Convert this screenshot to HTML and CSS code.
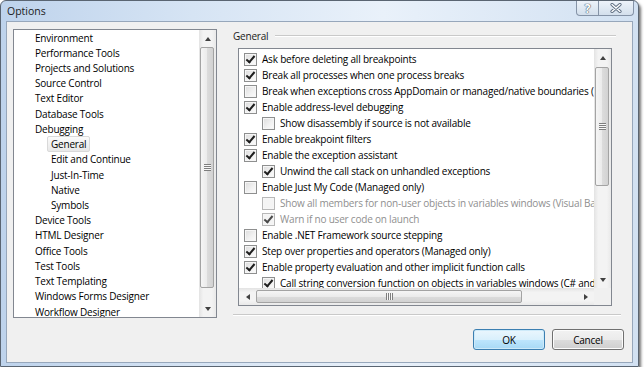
FILE: index.html
```html
<!DOCTYPE html>
<html>

<head>
    <title>Options</title>
    <link rel="stylesheet" href="styles.css">
</head>

<body>
    <div class="window">
        <div class="titlebar">
            <span class="title">Options</span>
            <div class="caption-btns">
                <span class="cap-btn help">?</span>
                <span class="cap-btn close">
                    <svg width="12" height="10" viewBox="0 0 12 10">
                        <path d="M2 1.5 L10 8.5 M10 1.5 L2 8.5" stroke="#5d6d82" stroke-width="3.2" stroke-linecap="round" />
                        <path d="M2 1.5 L10 8.5 M10 1.5 L2 8.5" stroke="#fff" stroke-width="1.4" stroke-linecap="round" />
                    </svg>
                </span>
            </div>
        </div>

        <div class="client">
            <div class="main">
                <div class="tree">
                    <ul class="tree-items">
                        <li>Environment</li>
                        <li>Performance Tools</li>
                        <li>Projects and Solutions</li>
                        <li>Source Control</li>
                        <li>Text Editor</li>
                        <li>Database Tools</li>
                        <li>Debugging</li>
                        <li class="sub"><span class="selected">General</span></li>
                        <li class="sub">Edit and Continue</li>
                        <li class="sub">Just-In-Time</li>
                        <li class="sub">Native</li>
                        <li class="sub">Symbols</li>
                        <li>Device Tools</li>
                        <li>HTML Designer</li>
                        <li>Office Tools</li>
                        <li>Test Tools</li>
                        <li>Text Templating</li>
                        <li>Windows Forms Designer</li>
                        <li>Workflow Designer</li>
                    </ul>
                    <div class="vscroll">
                        <div class="sb-btn"><span class="arr up"></span></div>
                        <div class="sb-track">
                            <div class="vthumb tree-thumb"><span class="grip"></span></div>
                        </div>
                        <div class="sb-btn"><span class="arr down"></span></div>
                    </div>
                </div>

                <div class="panel">
                    <div class="group-head">
                        <span>General</span>
                        <div class="head-line"></div>
                    </div>
                    <div class="listbox">
                        <div class="list-area">
                            <ul class="opts">
                                <li><span class="cb on"></span>Ask before deleting all breakpoints</li>
                                <li><span class="cb on"></span>Break all processes when one process breaks</li>
                                <li><span class="cb"></span>Break when exceptions cross AppDomain or managed/native boundaries (Managed only)</li>
                                <li><span class="cb on"></span>Enable address-level debugging</li>
                                <li class="sub"><span class="cb"></span>Show disassembly if source is not available</li>
                                <li><span class="cb on"></span>Enable breakpoint filters</li>
                                <li><span class="cb on"></span>Enable the exception assistant</li>
                                <li class="sub"><span class="cb on"></span>Unwind the call stack on unhandled exceptions</li>
                                <li><span class="cb"></span>Enable Just My Code (Managed only)</li>
                                <li class="sub off"><span class="cb"></span>Show all members for non-user objects in variables windows (Visual Basic only)</li>
                                <li class="sub off"><span class="cb on"></span>Warn if no user code on launch</li>
                                <li><span class="cb"></span>Enable .NET Framework source stepping</li>
                                <li><span class="cb on"></span>Step over properties and operators (Managed only)</li>
                                <li><span class="cb on"></span>Enable property evaluation and other implicit function calls</li>
                                <li class="sub"><span class="cb on"></span>Call string conversion function on objects in variables windows (C# and JavaScript only)</li>
                            </ul>
                            <div class="vscroll">
                                <div class="sb-btn"><span class="arr up"></span></div>
                                <div class="sb-track">
                                    <div class="vthumb opt-thumb"><span class="grip"></span></div>
                                </div>
                                <div class="sb-btn"><span class="arr down"></span></div>
                            </div>
                        </div>
                        <div class="hscroll">
                            <div class="sb-btn"><span class="arr left"></span></div>
                            <div class="sb-track">
                                <div class="hthumb"><span class="grip"></span></div>
                            </div>
                            <div class="sb-btn"><span class="arr right"></span></div>
                            <div class="corner"></div>
                        </div>
                    </div>
                    <div class="sep"></div>
                </div>
            </div>

            <div class="buttons">
                <button class="btn default">OK</button>
                <button class="btn">Cancel</button>
            </div>
        </div>
    </div>
</body>

</html>
```

FILE: styles.css
```css
body {
    margin: 0;
    background-color: #fff;
    font-family: 'Open Sans', 'Noto Sans', sans-serif;
    font-size: 10px;
    letter-spacing: -0.2px;
    color: #000;
}

ul {
    list-style: none;
    margin: 0;
    padding: 0;
}

.window {
    width: 639px;
    height: 367px;
    box-sizing: border-box;
    border: 1px solid #5a6572;
    border-radius: 6px 6px 0 0;
    background: linear-gradient(to right, #bed3ec 0%, #d6e4f4 30%, #e9f1fa 60%, #d2e1f2 100%);
    box-shadow: 2px 3px 3px rgba(0, 0, 0, 0.55);
    display: flex;
    flex-direction: column;
}

.titlebar {
    height: 20px;
    display: flex;
    justify-content: space-between;
    align-items: flex-start;
}

.title {
    padding: 2px 0 0 6px;
    font-size: 10.5px;
    line-height: 16px;
    letter-spacing: 0;
    color: #1b1b1b;
}

.caption-btns {
    display: flex;
    margin-right: 4px;
    height: 14px;
    border: 1px solid #8593a7;
    border-top: 0;
    border-radius: 0 0 4px 4px;
    background: linear-gradient(#edf3fa, #d3dfec);
}

.cap-btn {
    display: flex;
    align-items: center;
    justify-content: center;
    height: 14px;
}

.help {
    width: 21px;
    border-right: 1px solid #8593a7;
    font-size: 12px;
    font-weight: bold;
    color: #fff;
    text-shadow: 0 0 1px #4e5d70, 0 0 1px #4e5d70, 0 0 1px #4e5d70;
}

.close {
    width: 34px;
}

.client {
    flex: 1;
    margin: 0 5px 3px 5px;
    border: 1px solid #97a7bb;
    background-color: #f0f0f0;
    display: flex;
    flex-direction: column;
}

.main {
    display: flex;
    gap: 16px;
    padding: 7px 0 0 6px;
}

/* left tree */

.tree {
    width: 204px;
    height: 289px;
    box-sizing: border-box;
    border: 1px solid #828790;
    background-color: #fff;
    display: flex;
}

.tree-items {
    flex: 1;
    overflow: hidden;
}

.tree-items li {
    height: 15.22px;
    display: flex;
    align-items: center;
    padding-left: 21px;
    white-space: nowrap;
}

.tree-items li.sub {
    padding-left: 37px;
}

.selected {
    margin-left: -4px;
    padding: 0 3px;
    line-height: 14px;
    border: 1px solid #d9d9d9;
    border-radius: 2px;
    background: linear-gradient(#fbfbfb, #e8e8e8);
}

/* scrollbars */

.vscroll {
    width: 17px;
    flex: none;
    display: flex;
    flex-direction: column;
    background: linear-gradient(to right, #e3e3e3, #f3f3f3 25%, #f3f3f3 75%, #e9e9e9);
}

.hscroll {
    height: 17px;
    display: flex;
    background: linear-gradient(#e3e3e3, #f3f3f3 25%, #f3f3f3 75%, #e9e9e9);
}

.sb-btn {
    width: 17px;
    height: 17px;
    flex: none;
    display: flex;
    align-items: center;
    justify-content: center;
}

.sb-track {
    flex: 1;
    display: flex;
    flex-direction: column;
}

.hscroll .sb-track {
    flex-direction: row;
}

.vthumb {
    margin: 0 2px 0 1px;
    border: 1px solid #a3a3a3;
    border-radius: 2px;
    background: linear-gradient(to right, #f5f5f5, #ebebeb 50%, #dcdcdc 51%, #d2d2d2);
    display: flex;
    align-items: center;
    justify-content: center;
}

.tree-thumb {
    height: 239px;
}

.opt-thumb {
    height: 117px;
    margin-top: 1px;
}

.hthumb {
    width: 264px;
    margin: 2px 0 2px 0;
    border: 1px solid #a3a3a3;
    border-radius: 2px;
    background: linear-gradient(#f5f5f5, #ebebeb 50%, #dcdcdc 51%, #d2d2d2);
    display: flex;
    align-items: center;
    justify-content: center;
}

.grip {
    width: 7px;
    height: 7px;
    background: repeating-linear-gradient(#7e7e7e 0 1px, #f7f7f7 1px 2px);
}

.hthumb .grip {
    background: repeating-linear-gradient(to right, #7e7e7e 0 1px, #f7f7f7 1px 2px);
}

.arr {
    width: 0;
    height: 0;
    border: 3.5px solid transparent;
}

.arr.up {
    border-top: 0;
    border-bottom: 4px solid #404040;
}

.arr.down {
    border-bottom: 0;
    border-top: 4px solid #404040;
}

.arr.left {
    border-left: 0;
    border-right: 4px solid #404040;
}

.arr.right {
    border-right: 0;
    border-left: 4px solid #404040;
}

.corner {
    width: 17px;
    height: 17px;
    background-color: #f0f0f0;
}

/* right panel */

.panel {
    width: 388px;
}

.group-head {
    display: flex;
    align-items: center;
    gap: 7px;
    height: 14px;
    padding-right: 5px;
    color: #1a1a1a;
}

.head-line {
    flex: 1;
    border-top: 1px solid #c9c9c9;
    border-bottom: 1px solid #fff;
}

.listbox {
    width: 374px;
    height: 258px;
    box-sizing: border-box;
    margin: 5px 0 0 5px;
    border: 1px solid #828790;
    background-color: #fff;
    display: flex;
    flex-direction: column;
}

.list-area {
    flex: 1;
    display: flex;
    min-height: 0;
}

.opts {
    flex: 1;
    overflow: hidden;
    padding-top: 2px;
}

.opts li {
    height: 16px;
    display: flex;
    align-items: center;
    padding-left: 5px;
    white-space: nowrap;
}

.opts li.sub {
    padding-left: 23px;
}

.opts li.off {
    color: #8f8f8f;
}

.cb {
    width: 13px;
    height: 13px;
    flex: none;
    box-sizing: border-box;
    margin-right: 5px;
    border: 1px solid #8e8f8f;
    background: linear-gradient(135deg, #dcdcdc, #f2f2f2 60%, #fcfcfc);
    box-shadow: inset 0 0 0 1px #f6f6f6;
    position: relative;
}

.off .cb {
    border-color: #b8b8b8;
    background: #f4f4f4;
}

.cb.on::after {
    content: '';
    position: absolute;
    left: 3px;
    top: 0px;
    width: 3px;
    height: 7px;
    border-right: 2px solid #1e1e1e;
    border-bottom: 2px solid #1e1e1e;
    transform: rotate(40deg);
}

.off .cb.on::after {
    border-color: #4a4a4a;
}

.sep {
    margin: 8px 0 0 0;
    border-top: 1px solid #c9c9c9;
    border-bottom: 1px solid #fff;
}

/* dialog buttons */

.buttons {
    display: flex;
    justify-content: flex-end;
    gap: 7px;
    padding: 11px 8px 0 0;
}

.btn {
    width: 72px;
    height: 21px;
    padding: 0;
    font-family: 'Open Sans', 'Noto Sans', sans-serif;
    font-size: 10px;
    letter-spacing: -0.2px;
    color: #000;
    border: 1px solid #707070;
    border-radius: 3px;
    background: linear-gradient(#f2f2f2, #ebebeb 50%, #dddddd 51%, #cfcfcf);
    box-shadow: inset 0 0 0 1px #fcfcfc;
}

.btn.default {
    border-color: #3c7fb1;
    background: linear-gradient(#eaf6fd, #d9f0fc 50%, #bee6fd 51%, #a7d9f5);
    box-shadow: inset 0 0 0 1px #cdeaf9;
}
```
